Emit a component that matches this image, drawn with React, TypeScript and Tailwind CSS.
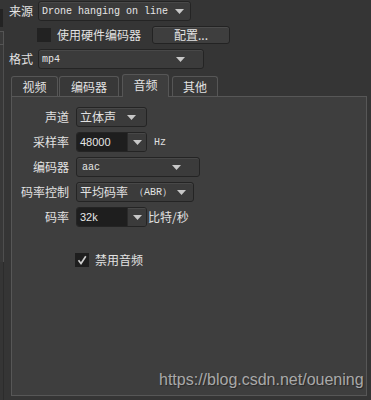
import React from "react";

const cjk = "font-[family-name:'Noto_Sans_CJK_SC','Liberation_Sans',sans-serif]";
const mono = "font-[family-name:'Liberation_Mono','DejaVu_Sans_Mono',monospace]";
const sans = "font-[family-name:'Liberation_Sans','DejaVu_Sans',sans-serif]";

function Arrow() {
  return (
    <svg width="9" height="5" viewBox="0 0 9 5" className="shrink-0">
      <polygon points="0,0 9,0 4.5,5" fill="#c8c8c8" />
    </svg>
  );
}

function Combo({
  width,
  children,
  arrowRight = 8,
}: {
  width: string;
  children: React.ReactNode;
  arrowRight?: number;
}) {
  return (
    <div
      className={`${width} h-[20px] flex items-center justify-between rounded-[3px] border border-[#242424] bg-[#3b3b3b] shadow-[inset_0_1px_0_rgba(255,255,255,0.07)] pl-[3px]`}
      style={{ paddingRight: arrowRight }}
    >
      <div className="flex items-center min-w-0 whitespace-nowrap">{children}</div>
      <Arrow />
    </div>
  );
}

function EditCombo({ value }: { value: string }) {
  return (
    <div className="w-[71px] h-[20px] flex rounded-[3px] border border-[#242424] overflow-hidden">
      <div className={`flex-1 bg-[#1e1e1e] flex items-center pl-[3px] text-[11px] ${sans} text-[#e6e6e6]`}>
        {value}
      </div>
      <div className="w-[19px] bg-[#3b3b3b] border-l border-[#2a2a2a] flex items-center justify-center shadow-[inset_0_1px_0_rgba(255,255,255,0.07)]">
        <Arrow />
      </div>
    </div>
  );
}

function Row({ label, children }: { label: string; children: React.ReactNode }) {
  return (
    <div className="flex items-center h-[20px]">
      <div className={`w-[57px] text-right text-[12px] leading-[20px] ${cjk}`}>{label}</div>
      <div className="ml-[7px] flex items-center">{children}</div>
    </div>
  );
}

function Tab({ label, w, active }: { label: string; w: string; active?: boolean }) {
  return (
    <div
      className={`${w} flex items-center justify-center rounded-t-[3px] border border-[#565656] text-[12px] ${cjk} ${
        active
          ? "h-[23px] bg-[#3e3e3e] border-b-0 -mb-[1px] relative z-10 pb-[2px]"
          : "h-[20px] bg-[#383838] border-b-0"
      }`}
    >
      {label}
    </div>
  );
}

export default function App() {
  return (
    <div className={`w-[371px] h-[400px] bg-[#353535] relative overflow-hidden flex text-[#e2e2e2] ${cjk}`}>
      {/* left cut-off strip */}
      <div className="w-[4px] flex flex-col shrink-0">
        <div className="h-[9px]" />
        <div className="h-[18px] w-[3px] bg-[#232323]" />
        <div className="h-[4px]" />
        <div className="h-[14px] w-[4px] bg-[#3a3a3a] border-r border-y border-[#555555]" />
        <div className="h-[217px] w-[4px] bg-[#383838] border-r border-[#4e4e4e]" />
        <div className="flex-1 w-[4px] border-r border-[#2c2c2c]" />
      </div>

      <div className="flex flex-col pl-[5px]">
        {/* 来源 */}
        <div className="mt-[1px] h-[20px] flex items-center">
          <div className="w-[29px] text-[12px] leading-[20px]">来源</div>
          <Combo width="w-[153px]" arrowRight={6}>
            <span className={`${mono} text-[10px] text-[#e6e6e6]`}>Drone hanging on line</span>
          </Combo>
        </div>

        {/* 使用硬件编码器 */}
        <div className="mt-[5px] h-[18px] flex items-center">
          <div className="ml-[28px] w-[14px] h-[14px] bg-[#222222]" />
          <div className="ml-[6px] text-[12px] leading-[18px]">使用硬件编码器</div>
          <div className="ml-[11px] w-[78px] h-[18px] rounded-[3px] border border-[#232323] bg-[#3e3e3e] shadow-[inset_0_1px_0_rgba(255,255,255,0.08)] flex items-center justify-center text-[12px]">
            配置...
          </div>
        </div>

        {/* 格式 */}
        <div className="mt-[5px] h-[20px] flex items-center">
          <div className="w-[29px] text-[12px] leading-[20px]">格式</div>
          <Combo width="w-[166px]" arrowRight={18}>
            <span className={`${mono} text-[10px] text-[#e6e6e6]`}>mp4</span>
          </Combo>
        </div>

        {/* tabs */}
        <div className="mt-[5px] ml-[2px] h-[22px] flex items-end gap-[1px]">
          <Tab label="视频" w="w-[47px]" />
          <Tab label="编码器" w="w-[60px]" />
          <div className="w-[1px]" />
          <Tab label="音频" w="w-[47px]" active />
          <div className="w-[1px]" />
          <Tab label="其他" w="w-[46px]" />
        </div>

        {/* panel */}
        <div className="ml-[2px] w-[356px] h-[300px] border border-[#575757] bg-[#3e3e3e] pt-[10px] flex flex-col gap-[5px]">
          <Row label="声道">
            <Combo width="w-[71px]" arrowRight={10}>
              <span className="text-[12px]">立体声</span>
            </Combo>
          </Row>
          <Row label="采样率">
            <EditCombo value="48000" />
            <span className={`ml-[7px] ${mono} text-[10px] text-[#e0e0e0]`}>Hz</span>
          </Row>
          <Row label="编码器">
            <Combo width="w-[124px]" arrowRight={18}>
              <span className={`${mono} text-[10px] text-[#e6e6e6] pl-[2px]`}>aac</span>
            </Combo>
          </Row>
          <Row label="码率控制">
            <Combo width="w-[118px]" arrowRight={7}>
              <span className="text-[12px]">平均码率</span>
              <span className={`${mono} text-[10px] ml-[6px]`}>（ABR）</span>
            </Combo>
          </Row>
          <Row label="码率">
            <EditCombo value="32k" />
            <span className="ml-[1px] text-[12px]">比特/秒</span>
          </Row>

          <div className="mt-[21px] ml-[63px] h-[14px] flex items-center">
            <div className="w-[14px] h-[14px] bg-[#1e1e1e] flex items-center justify-center">
              <svg width="10" height="10" viewBox="0 0 10 10">
                <path d="M1.5 5.2 L4 8.5 L8.8 1.2" stroke="#d0d0d0" strokeWidth="1.6" fill="none" />
              </svg>
            </div>
            <div className="ml-[6px] text-[12px] leading-[14px]">禁用音频</div>
          </div>
        </div>
      </div>

      <div
        className={`absolute left-[159px] top-[369px] text-[16px] leading-[22px] text-[#a9a9a9] ${sans} [text-shadow:1px_1px_1px_rgba(0,0,0,0.35)]`}
      >
        https://blog.csdn.net/ouening
      </div>
    </div>
  );
}
